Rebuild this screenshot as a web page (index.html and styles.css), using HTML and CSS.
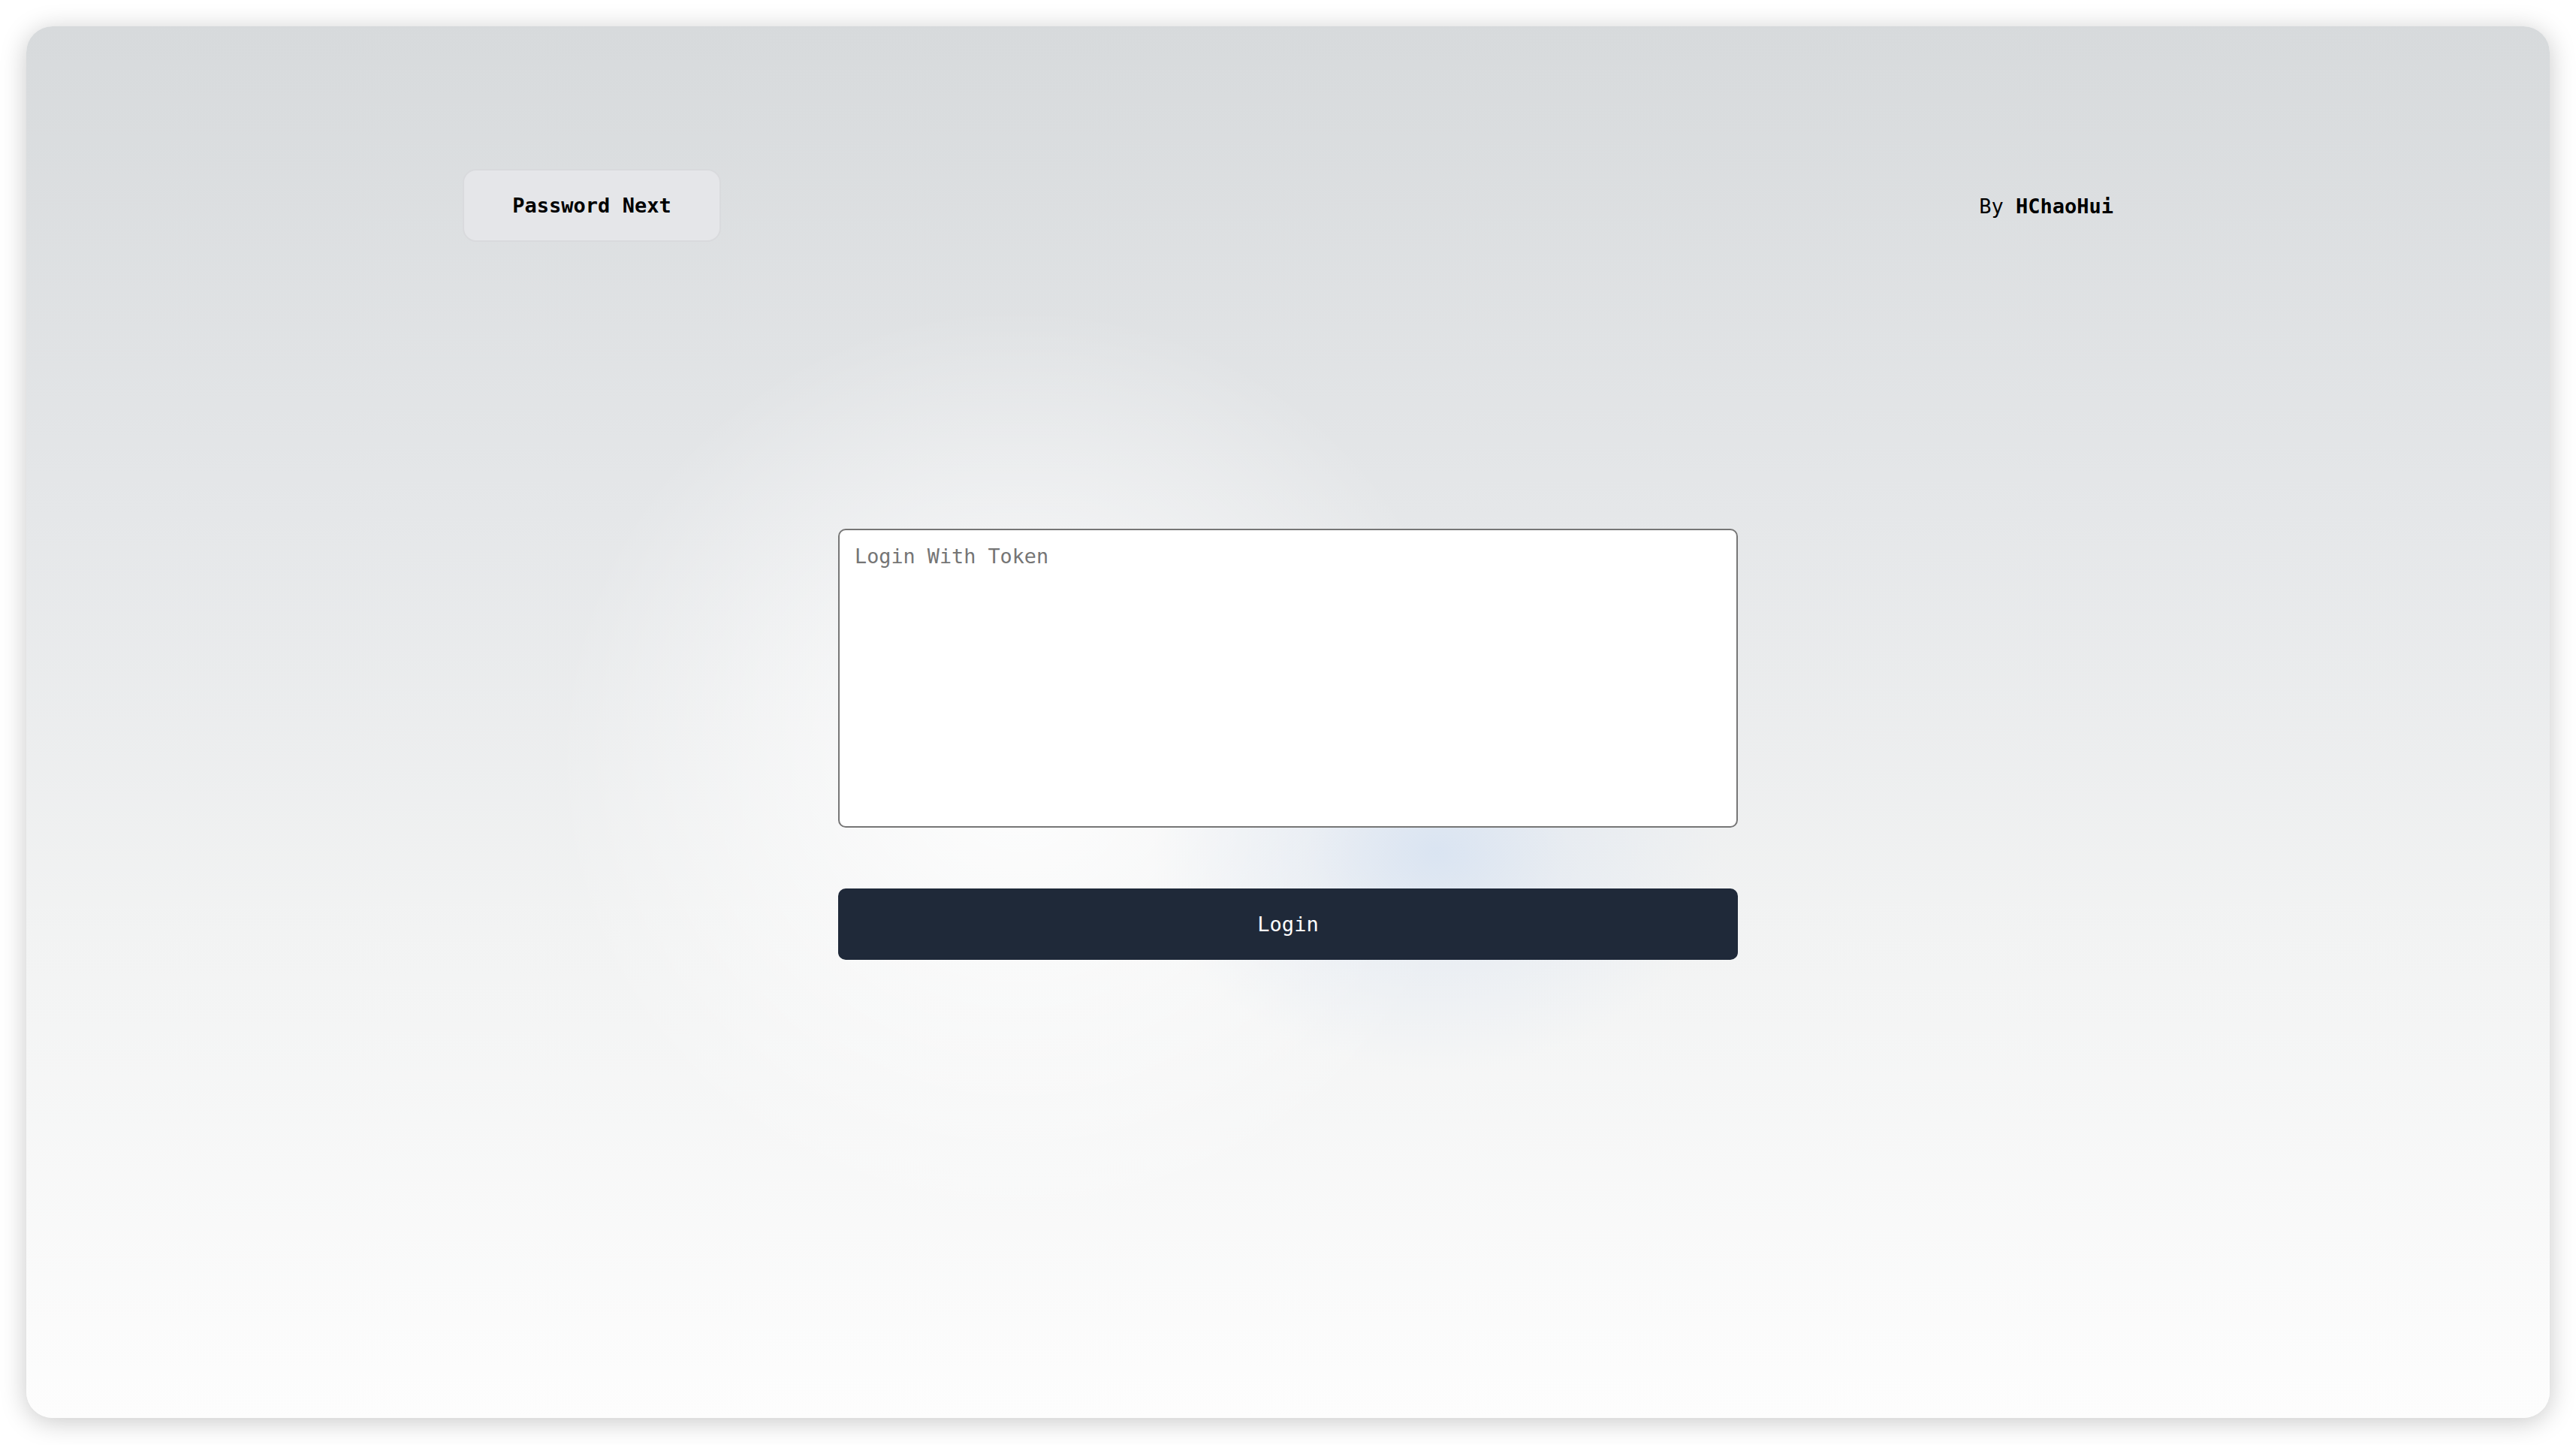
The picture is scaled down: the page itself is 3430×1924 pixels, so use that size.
FILE: index.html
```html
<!DOCTYPE html>
<html lang="en">
<head>
<meta charset="utf-8">
<title>Password Next</title>
<link rel="stylesheet" href="styles.css">
</head>
<body>
<div class="frame">
  <div class="card">
    <header class="header">
      <button class="brand">Password Next</button>
      <div class="author">By <strong>HChaoHui</strong></div>
    </header>
    <main class="form">
      <textarea class="token" placeholder="Login With Token"></textarea>
      <button class="login">Login</button>
    </main>
  </div>
</div>
</body>
</html>
```
FILE: styles.css
```css
html, body {
  margin: 0;
  padding: 0;
  background: #ffffff;
}
body {
  font-family: "DejaVu Sans Mono", "Liberation Mono", monospace;
  font-size: 27px;
  color: #000;
}
.frame {
  box-sizing: border-box;
  width: 3430px;
  height: 1924px;
  padding: 35px 35px 36px 35px;
}
.card {
  box-sizing: border-box;
  height: 100%;
  border-radius: 35px;
  overflow: hidden;
  box-shadow: 0 5px 35px rgba(0, 0, 0, 0.22);
  background:
    radial-gradient(ellipse 380px 290px at 1878px 1100px, rgba(214, 226, 242, 0.85) 0%, rgba(220, 229, 242, 0.4) 45%, rgba(225, 230, 238, 0) 100%),
    radial-gradient(circle 620px at 1321px 993px, rgba(255, 255, 255, 0.9) 0%, rgba(255, 255, 255, 0.5) 45%, rgba(255, 255, 255, 0) 100%),
    linear-gradient(180deg, #d7dadc 0%, #e5e7e9 35%, #f2f3f3 65%, #fdfdfd 100%);
  display: flex;
  flex-direction: column;
  align-items: center;
}
.header {
  width: 2198px;
  margin-top: 190px;
  display: flex;
  justify-content: space-between;
  align-items: center;
}
.brand {
  box-sizing: border-box;
  width: 344px;
  height: 97px;
  border: 2px solid #d9dadd;
  border-radius: 18px;
  background: #e5e6e9;
  font-family: "DejaVu Sans Mono", "Liberation Mono", monospace;
  font-size: 27px;
  font-weight: bold;
  color: #000;
  padding: 0;
}
.author {
  font-size: 27px;
  color: #000;
  padding-top: 2px;
}
.author strong {
  font-weight: bold;
}
.form {
  width: 1198px;
  margin-top: 382px;
  display: flex;
  flex-direction: column;
}
.token {
  box-sizing: border-box;
  width: 100%;
  height: 398px;
  border: 2px solid #767676;
  border-radius: 10px;
  background: #ffffff;
  padding: 19px 20px;
  font-family: "DejaVu Sans Mono", "Liberation Mono", monospace;
  font-size: 26.8px;
  resize: none;
  outline: none;
  margin: 0;
}
.token::placeholder {
  color: #757575;
}
.login {
  box-sizing: border-box;
  width: 100%;
  height: 95px;
  margin-top: 81px;
  border: none;
  border-radius: 10px;
  background: #1f2939;
  color: #ffffff;
  font-family: "DejaVu Sans Mono", "Liberation Mono", monospace;
  font-size: 27px;
  padding: 0;
}
```
